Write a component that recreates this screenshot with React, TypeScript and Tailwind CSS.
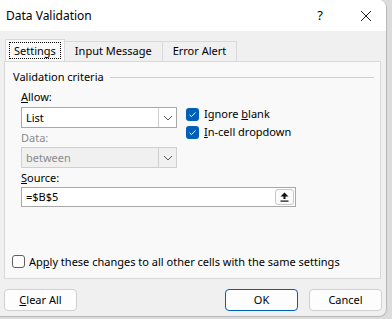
import React from "react"

function Check({ checked }: { checked: boolean }) {
  return checked ? (
    <span className="flex h-[13px] w-[13px] items-center justify-center rounded-[3px] bg-[#005fb8]">
      <svg width="9" height="9" viewBox="0 0 9 9" fill="none">
        <path d="M1.5 4.8 L3.5 6.6 L7.5 2.4" stroke="white" strokeWidth="1" />
      </svg>
    </span>
  ) : (
    <span className="h-[13px] w-[13px] rounded-[3px] border border-[#5f5f5f] bg-white" />
  )
}

function Chevron() {
  return (
    <svg width="10" height="6" viewBox="0 0 10 6" fill="none">
      <path d="M1 1 L5 5 L9 1" stroke="#555" strokeWidth="1" />
    </svg>
  )
}

function Combo({ value, disabled }: { value: string; disabled?: boolean }) {
  return (
    <div
      className={`flex h-[21px] w-[156px] items-stretch border ${
        disabled ? "border-[#cfcfcf] bg-[#f0f0f0] text-[#8a8a8a]" : "border-[#a8a8a8] bg-white text-black"
      }`}
    >
      <span className="flex-1 pl-[4px] leading-[19px]">{value}</span>
      <span className="flex w-[18px] items-center justify-center border-l border-[#cfcfcf]">
        <Chevron />
      </span>
    </div>
  )
}

function Button({ children, primary }: { children: React.ReactNode; primary?: boolean }) {
  return (
    <button
      type="button"
      className={`flex h-[22px] w-[73px] items-center justify-center rounded-[4px] border bg-[#fdfdfd] ${
        primary ? "border-[#005fb8]" : "border-[#d0d0d0]"
      }`}
    >
      {children}
    </button>
  )
}

export default function App() {
  return (
    <div
      className="flex h-[319px] w-[392px] bg-[#dcdcdc] text-[11px] text-black"
      style={{ fontFamily: '"Noto Sans", "Open Sans", sans-serif' }}
    >
      <div className="flex h-[317px] w-[387px] flex-col overflow-hidden rounded-br-[8px] rounded-tr-[8px] border-r border-b border-[#b8b8b8] bg-[#f0f0f0]">
        <div className="flex h-[31px] items-center bg-white pl-[6px]">
          <span className="flex-1 text-[12px]">Data Validation</span>
          <span className="w-[40px] text-center text-[13px]">?</span>
          <span className="w-[6px]" />
          <span className="flex w-[40px] items-center justify-center">
            <svg width="12" height="12" viewBox="0 0 12 12">
              <path d="M1 1 L11 11 M11 1 L1 11" stroke="#222" strokeWidth="1" />
            </svg>
          </span>
        </div>

        <div className="flex pl-[5px] pt-[8px]">
          <div className="z-10 -mb-px flex h-[22px] items-center border border-b-0 border-[#d9d9d9] bg-[#f9f9f9] px-[3px]">
            <span className="border border-dotted border-black px-[4px] leading-[15px]">Settings</span>
          </div>
          <div className="mt-[2px] flex h-[20px] items-center border border-l-0 border-b-0 border-[#d9d9d9] bg-[#f0f0f0] px-[10px]">
            Input Message
          </div>
          <div className="mt-[2px] flex h-[20px] items-center border border-l-0 border-b-0 border-[#d9d9d9] bg-[#f0f0f0] px-[10px]">
            Error Alert
          </div>
        </div>

        <div className="ml-[4px] flex h-[218px] w-[377px] flex-col border border-[#d9d9d9] bg-[#f9f9f9]">
          <div className="flex items-center pl-[8px] pr-[6px] pt-[7px] leading-[16px]">
            <span>Validation criteria</span>
            <span className="ml-[6px] h-px flex-1 bg-[#d0d0d0]" />
          </div>
          <div className="flex pl-[16px] pt-[4px]">
            <div className="flex flex-col">
              <span className="leading-[16px]">
                <u>A</u>llow:
              </span>
              <div className="mt-[2px]">
                <Combo value="List" />
              </div>
              <span className="mt-[2px] leading-[16px] text-[#8a8a8a]">Data:</span>
              <div className="mt-[1px]">
                <Combo value="between" disabled />
              </div>
            </div>
            <div className="ml-[9px] flex flex-col gap-[5px] pt-[19px]">
              <div className="flex h-[13px] items-center gap-[5px]">
                <Check checked />
                <span>
                  Ignore <u>b</u>lank
                </span>
              </div>
              <div className="flex h-[13px] items-center gap-[5px]">
                <Check checked />
                <span>
                  <u>I</u>n-cell dropdown
                </span>
              </div>
            </div>
          </div>
          <span className="mt-[2px] pl-[16px] leading-[16px]">
            <u>S</u>ource:
          </span>
          <div className="ml-[16px] mt-[1px] flex h-[20px] w-[275px] items-center border border-[#a8a8a8] bg-white pl-[4px] pr-[1px]">
            <span className="flex-1">=$B$5</span>
            <span className="flex h-[16px] w-[19px] items-center justify-center rounded-[3px] border border-[#c8c8c8] bg-[#fbfbfb]">
              <svg width="9" height="10" viewBox="0 0 9 10">
                <path d="M4.5 0.5 L8.5 4.5 L5.5 4.5 L5.5 7 L3.5 7 L3.5 4.5 L0.5 4.5 Z" fill="#111" />
                <rect x="0.5" y="8.5" width="8" height="1.2" fill="#111" />
              </svg>
            </span>
          </div>
          <div className="flex-1" />
          <div className="mb-[8px] flex items-center gap-[4px] pl-[7px]">
            <Check checked={false} />
            <span>
              Ap<u>p</u>ly these changes to all other cells with the same settings
            </span>
          </div>
        </div>

        <div className="flex items-center px-[4px] pt-[10px]">
          <Button>
            <u>C</u>lear All
          </Button>
          <div className="flex-1" />
          <Button primary>OK</Button>
          <div className="w-[11px]" />
          <Button>Cancel</Button>
        </div>
      </div>
    </div>
  )
}
